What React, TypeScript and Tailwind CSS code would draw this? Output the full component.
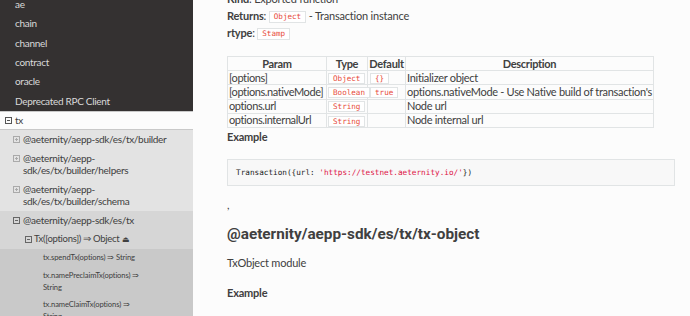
import React from "react";

const lato = { fontFamily: "Lato, 'Open Sans', sans-serif" };

function Box({ open, color }: { open: boolean; color: string }) {
  return (
    <svg width="7" height="7" viewBox="0 0 7 7" className="shrink-0">
      <rect x="0.5" y="0.5" width="6" height="6" fill="none" stroke={color} strokeWidth="1" />
      <line x1="2" y1="3.5" x2="5" y2="3.5" stroke={color} strokeWidth="1" />
      {!open && <line x1="3.5" y1="2" x2="3.5" y2="5" stroke={color} strokeWidth="1" />}
    </svg>
  );
}

function Lit({ children, tall }: { children: React.ReactNode; tall?: boolean }) {
  return (
    <span
      className={
        "inline-block border border-[#e1e4e5] bg-white px-[4px] text-[7.6px] tracking-normal text-[#e74c3c] align-middle " +
        (tall ? "leading-[10px]" : "leading-[9px]")
      }
      style={{ fontFamily: "'DejaVu Sans Mono', monospace" }}
    >
      {children}
    </span>
  );
}

export default function App() {
  const dark = ["ae", "chain", "channel", "contract", "oracle", "Deprecated RPC Client"];
  return (
    <div className="flex h-[316px] w-[690px] overflow-hidden bg-[#fcfcfc] text-[#404040]" style={lato}>
      {/* Sidebar */}
      <div className="w-[193px] shrink-0 overflow-hidden bg-[#343131] text-[10px] tracking-[-0.3px]">
        <div className="-mt-[5px]">
          {dark.map((t) => (
            <div key={t} className="flex h-[19.3px] items-center pl-[15px] text-[#d9d9d9]">
              {t}
            </div>
          ))}
        </div>
        <div className="bg-[#e3e3e3]">
          <div className="flex h-[19px] items-center gap-[3px] border-y border-[#c9c9c9] bg-[#fcfcfc] pl-[5px] text-[#404040]">
            <Box open color="#555" />
            <span>tx</span>
          </div>
          {[
            "@aeternity/aepp-sdk/es/tx/builder",
            "@aeternity/aepp- sdk/es/tx/builder/helpers",
            "@aeternity/aepp- sdk/es/tx/builder/schema",
          ].map((t) => (
            <div key={t} className="relative py-[3.5px] pl-[23px] pr-[10px] leading-[12px] text-[#404040]">
              <span className="absolute left-[13px] top-[6px]">
                <Box open={false} color="#aaa" />
              </span>
              {t.split(" ").map((p, i) => (
                <div key={i} className="whitespace-nowrap">
                  {p}
                </div>
              ))}
            </div>
          ))}
          <div className="bg-[#d6d6d6]">
            <div className="relative flex h-[19px] items-center pl-[23px] text-[#404040]">
              <span className="absolute left-[13px] top-[6px]">
                <Box open color="#666" />
              </span>
              @aeternity/aepp-sdk/es/tx
            </div>
            <div className="relative flex h-[19px] items-center pl-[34px] text-[9.5px] text-[#404040]">
              <span className="absolute left-[25px] top-[6px]">
                <Box open color="#666" />
              </span>
              Tx([options]) ⇒ Object <span className="ml-[3px] text-[8px]">⏏</span>
            </div>
          </div>
          <div className="bg-[#c9c9c9] pb-[20px] text-[7.6px] tracking-[-0.1px] text-[#404040]">
            <div className="py-[3.5px] pl-[43px] pr-[30px] leading-[11px]">tx.spendTx(options) ⇒ String</div>
            <div className="py-[2.5px] pl-[43px] pr-[30px] leading-[12px]">
              <div>tx.namePreclaimTx(options) ⇒</div>
              <div>String</div>
            </div>
            <div className="py-[2.5px] pl-[43px] pr-[30px] leading-[12px]">
              <div>tx.nameClaimTx(options) ⇒</div>
              <div>String</div>
            </div>
          </div>
        </div>
      </div>

      {/* Main */}
      <div className="flex-1 overflow-hidden pl-[34px] pr-[15px] text-[11px] tracking-[-0.2px]">
        <div className="-mt-[10px]">
          <div className="h-[17px] leading-[17px]">
            <b>Kind</b>: Exported function
          </div>
          <div className="h-[17px] leading-[17px]">
            <b>Returns</b>: <Lit tall>Object</Lit> - Transaction instance
          </div>
          <div className="h-[17px] leading-[17px]">
            <b>rtype</b>: <Lit tall>Stamp</Lit>
          </div>
          <table className="mt-[15px] w-[426px] table-fixed border-collapse text-[11px] tracking-[-0.3px]">
            <colgroup>
              <col className="w-[99px]" />
              <col className="w-[41px]" />
              <col className="w-[38px]" />
              <col className="w-[248px]" />
            </colgroup>
            <thead>
              <tr className="h-[14px] leading-[12px]">
                <th className="border border-[#e1e4e5] p-0 text-center font-bold">Param</th>
                <th className="border border-[#e1e4e5] p-0 text-center font-bold">Type</th>
                <th className="border border-[#e1e4e5] p-0 text-center font-bold">Default</th>
                <th className="border border-[#e1e4e5] p-0 text-center font-bold">Description</th>
              </tr>
            </thead>
            <tbody>
              {[
                ["[options]", "Object", "{}", "Initializer object"],
                ["[options.nativeMode]", "Boolean", "true", "options.nativeMode - Use Native build of transaction's"],
                ["options.url", "String", "", "Node url"],
                ["options.internalUrl", "String", "", "Node internal url"],
              ].map((r) => (
                <tr key={r[0]} className="h-[14.25px] leading-[12px]">
                  <td className="overflow-hidden whitespace-nowrap border border-[#e1e4e5] px-[1px] py-0 tracking-[-0.4px]">
                    {r[0]}
                  </td>
                  <td className="border border-[#e1e4e5] px-[1px] py-0">
                    <Lit>{r[1]}</Lit>
                  </td>
                  <td className="border border-[#e1e4e5] px-[2px] py-0">{r[2] && <Lit>{r[2]}</Lit>}</td>
                  <td className="overflow-hidden whitespace-nowrap border border-[#e1e4e5] px-[1px] py-0">{r[3]}</td>
                </tr>
              ))}
            </tbody>
          </table>
          <div className="mt-[1px] h-[15px] font-bold leading-[15px]">Example</div>
          <div
            className="mt-[15px] flex h-[27px] items-center border border-[#e1e4e5] bg-[#f8f8f8] pl-[8px] text-[7.7px] tracking-normal text-[#222]"
            style={{ fontFamily: "'DejaVu Sans Mono', monospace" }}
          >
            Transaction({"{"}url: <span className="ml-[4.6px] text-[#dd1144]">'https://testnet.aeternity.io/'</span>
            {"})"}
          </div>
          <div className="mt-[12px] h-[14px] leading-[14px]">,</div>
          <h2
            className="mt-[12px] h-[20px] text-[15.3px] font-bold leading-[20px] tracking-normal text-[#404040]"
            style={{ fontFamily: "Roboto, 'DejaVu Serif', serif" }}
          >
            @aeternity/aepp-sdk/es/tx/tx-object
          </h2>
          <div className="mt-[12px] h-[14px] leading-[14px]">TxObject module</div>
          <div className="mt-[16px] h-[14px] font-bold leading-[14px]">Example</div>
        </div>
      </div>
    </div>
  );
}
